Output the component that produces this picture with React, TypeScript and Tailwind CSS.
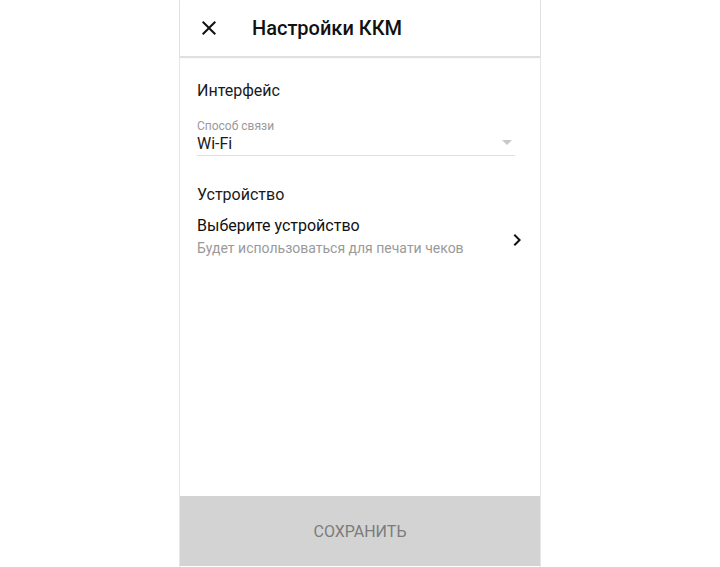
import React from "react";

export default function App() {
  return (
    <div
      className="w-[720px] h-[567px] bg-white flex justify-center"
      style={{ fontFamily: "Roboto, 'Noto Sans', sans-serif" }}
    >
      <div className="w-[362px] h-[567px] border-x border-[#e6e6e6] flex flex-col">
        <div className="h-[56px] flex items-center relative z-10 shadow-[0_2px_1px_rgba(0,0,0,0.12)] bg-white">
          <div className="w-[56px] flex justify-center pl-[1px]">
            <svg width="24" height="24" viewBox="0 0 24 24">
              <path
                d="M19 6.41 17.59 5 12 10.59 6.41 5 5 6.41 10.59 12 5 17.59 6.41 19 12 13.41 17.59 19 19 17.59 13.41 12z"
                fill="#111"
              />
            </svg>
          </div>
          <div className="ml-[16px] text-[20px] font-medium text-[#111] leading-none">
            Настройки ККМ
          </div>
        </div>
        <div className="flex-1 flex flex-col pt-[25px] px-[17px]">
          <div className="text-[16px] text-[#1a1a1a] leading-[20px] h-[20px]">Интерфейс</div>
          <div className="mt-[18px] w-[318px] border-b border-[#e0e0e0] relative">
            <div className="text-[12px] text-[#9a9a9a] leading-[14px]">Способ связи</div>
            <div className="text-[16px] text-[#1a1a1a] leading-[20px] mt-[1px] pb-[1px]">Wi-Fi</div>
            <svg className="absolute right-[3px] top-[21px]" width="10" height="6" viewBox="0 0 10 6">
              <path d="M0 0h10L5 5z" fill="#c8c8c8" />
            </svg>
          </div>
          <div className="mt-[29px] text-[16px] text-[#1a1a1a] leading-[20px]">Устройство</div>
          <div className="mt-[11px] flex items-center">
            <div className="flex-1">
              <div className="text-[16px] text-[#111] leading-[20px]">Выберите устройство</div>
              <div className="text-[14px] text-[#9a9a9a] leading-[18px] mt-[3px]">
                Будет использоваться для печати чеков
              </div>
            </div>
            <svg className="mr-[-6px] mt-[6px]" width="24" height="24" viewBox="0 0 24 24">
              <path d="M8.59 16.59 13.17 12 8.59 7.41 10 6l6 6-6 6z" fill="#111" />
            </svg>
          </div>
        </div>
        <div className="h-[70px] bg-[#d3d3d3] flex items-center justify-center text-[16px] text-[#7c7c7c] mb-[1px] pt-[1px]">
          СОХРАНИТЬ
        </div>
      </div>
    </div>
  );
}
